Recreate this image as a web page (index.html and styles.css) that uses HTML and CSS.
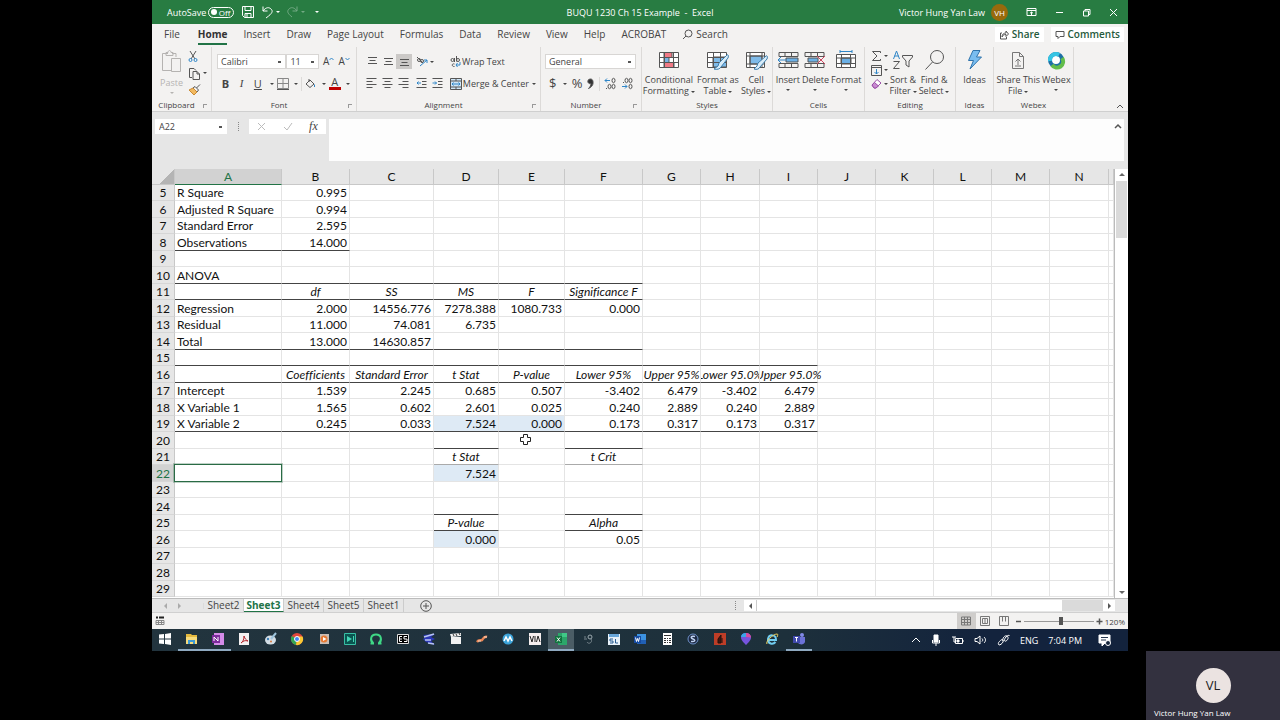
FILE: index.html
```html
<!DOCTYPE html>
<html lang="en">
<head>
    <meta charset="UTF-8">
    <meta name="viewport" content="width=device-width, initial-scale=1.0">
    <title>BUQU 1230 Ch 15 Example - Excel</title>
    <link rel="stylesheet" href="styles.css">
</head>
<body>
    <main class="desktop">
        <header class="title-bar">
            <div class="quick-access">
                <label class="autosave">AutoSave
                    <span class="switch"><input type="checkbox"><span>Off</span></span>
                </label>
                <button class="save" aria-label="Save"><svg width="14" height="14" viewBox="0 0 14 14"><path d="M1.5 1.5h11v11h-9l-2-2zM4 1.5v4h6v-4M4 12.5v-4h6v4M6 9v3"/></svg></button>
                <button aria-label="Undo"><svg width="13" height="14" viewBox="0 0 13 14"><path d="M2 1.500v4.500h4.500M2 6c3-4 6-4 8-2s2 4-5 9"/></svg><i class="caret"></i></button>
                <button class="faded" aria-label="Redo"><svg width="13" height="14" viewBox="0 0 13 14"><path d="M11 1.500v4.500H6.500M11 6C8 2 5 2 3 4s-2 4 3 8"/></svg><i class="caret"></i></button>
                <button class="customize" aria-label="Customize Quick Access Toolbar"><i class="caret"></i></button>
            </div>
            <h1>BUQU 1230 Ch 15 Example&nbsp; -&nbsp; Excel</h1>
            <div class="window-controls">
                <span>Victor Hung Yan Law</span>
                <span class="avatar">VH</span>
                <button aria-label="Ribbon Display Options"><svg width="11" height="10" viewBox="0 0 11 10"><path d="M1 1.500h9v7H1zM1 3.500h9M5.500 8V5M4 6.200 5.500 5 7 6.200"/></svg></button>
                <button aria-label="Minimize"><svg width="9" height="9" viewBox="0 0 9 9"><path d="M1 4.500h7"/></svg></button>
                <button aria-label="Restore"><svg width="9" height="9" viewBox="0 0 9 9"><path d="M1.500 3h5v5h-5zM3 3V1.500h5v5H6.500"/></svg></button>
                <button aria-label="Close"><svg width="9" height="9" viewBox="0 0 9 9"><path d="m1 1 7 7M8 1 1 8"/></svg></button>
            </div>
        </header>

        <nav class="tabs">
            <a class="file" href="#">File</a>
            <a class="current" href="#">Home</a>
            <a href="#">Insert</a>
            <a href="#">Draw</a>
            <a href="#">Page Layout</a>
            <a href="#">Formulas</a>
            <a href="#">Data</a>
            <a href="#">Review</a>
            <a href="#">View</a>
            <a href="#">Help</a>
            <a href="#">ACROBAT</a>
            <a class="search" href="#"><svg width="11" height="11" viewBox="0 0 11 11"><circle cx="6.500" cy="4.500" r="3.500"/><path d="M4 7 1 10"/></svg>Search</a>
            <button class="share"><svg width="10" height="10" viewBox="0 0 10 10"><path d="M3 3H1.500v6h6V7M3 7c0-3 2-4 4-4V1l2.500 3L7 6.500v-2C5 4.500 4 5 3 7z"/></svg>Share</button>
            <button class="comments"><svg width="10" height="10" viewBox="0 0 10 10"><path d="M1 1.500h8v5H5l-2 2v-2H1z"/></svg>Comments</button>
        </nav>

        <section class="ribbon">
            <div class="group clipboard">
                <div class="group-body">
                    <button class="big paste" disabled>
                        <svg width="22" height="23" viewBox="0 0 22 23"><path d="M7 3.500H1.500v17H10M15 7V3.500h-4M5 5.500v-3h2C7 1 8 .5 8.500.5S10 1 10 2.500h2v3zM10.500 8.500h9v13h-9z"/></svg>
                        <span>Paste</span><i class="caret"></i>
                    </button>
                    <div class="small-column">
                        <button aria-label="Cut"><svg width="10" height="13" viewBox="0 0 10 13"><path d="m2 1 5 8M8 1 3 9"/><g class="blue"><circle cx="2.500" cy="10" r="1.500"/><circle cx="7.500" cy="10" r="1.500"/></g></svg></button>
                        <button aria-label="Copy"><svg width="13" height="13" viewBox="0 0 13 13"><path d="M4 10.500H1.500v-9H6l2 2M5 4.500h4l2.500 2.500v5.500H5zM9 4.500V7h2.500"/></svg><i class="caret"></i></button>
                        <button aria-label="Format Painter"><svg width="13" height="13" viewBox="0 0 13 13"><path d="M1 7 5 5l4 4-3 3z" fill="#f2b95f" stroke="#c98a35"/><path d="m5 5 2-1.500 3.500 3.500L9 9M8.500 5 12 1.500" /></svg></button>
                    </div>
                </div>
                <div class="group-name with-launcher">Clipboard</div><i class="launcher"></i>
            </div>

            <div class="group font">
                <div class="group-body rows">
                    <div class="row">
                        <select class="font-name" aria-label="Font"><option>Calibri</option></select><select class="font-size" aria-label="Font size"><option>11</option></select>
                        <button class="grow" aria-label="Increase font size">A<svg width="5" height="12" viewBox="0 0 5 12"><path class="blue" d="M.5 4 2.500 2l2 2"/></svg></button>
                        <button class="grow" aria-label="Decrease font size">A<svg width="5" height="12" viewBox="0 0 5 12"><path class="blue" d="m.5 2 2 2 2-2"/></svg></button>
                    </div>
                    <div class="row spread">
                        <button class="letter"><b>B</b></button>
                        <button class="letter italic">I</button>
                        <button class="letter underline">U</button><i class="caret"></i>
                        <button aria-label="Borders"><svg width="12" height="12" viewBox="0 0 12 12"><path d="M.5.5h11v10H.5zM6 .5v10M.5 5.500h11" stroke="#888"/><path d="M0 11.500h12"/></svg></button><i class="caret"></i>
                        <i class="bar"></i>
                        <button aria-label="Fill color"><svg width="11" height="11" viewBox="0 0 11 11"><path d="m1 6 4-4 4 4-4 3.500zM4 1v3"/><path class="blue" d="M9.500 6.500v2.500"/></svg></button><i class="caret"></i>
                        <button class="font-color">A</button><i class="caret"></i>
                    </div>
                </div>
                <div class="group-name with-launcher">Font</div><i class="launcher"></i>
            </div>

            <div class="group alignment">
                <div class="group-body rows">
                    <div class="row">
                        <button aria-label="Top align"><svg width="11" height="9" viewBox="0 0 11 9"><path d="M1 .5h9M2.500 3.500h6M1 6.500h9"/></svg></button>
                        <button aria-label="Middle align"><svg width="11" height="9" viewBox="0 0 11 9"><path d="M1 1.500h9M2.500 4.500h6M1 7.500h9"/></svg></button>
                        <button class="pressed" aria-label="Bottom align"><svg width="11" height="9" viewBox="0 0 11 9"><path d="M1 2.500h9M2.500 5.500h6M1 8.500h9"/></svg></button>
                        <button class="wide" aria-label="Orientation"><svg width="12" height="11" viewBox="0 0 12 11"><circle cx="3" cy="4" r="1.500"/><circle cx="6" cy="5" r="1.500"/><path d="m1 1 6 6"/><path class="blue" d="m4 10 7-6M8 4h3v3"/></svg><i class="caret"></i></button>
                        <button class="text-button"><svg width="11" height="12" viewBox="0 0 11 12"><circle cx="2.500" cy="4" r="1.500"/><path d="M4.500 2v4M6.500 0v5.500M4.500 8c-3-1-3 3 0 2.500"/><circle cx="8" cy="4" r="1.500"/><path class="blue" d="M10 6v3H6M7.500 7 6 9l1.500 2"/></svg>Wrap Text</button>
                    </div>
                    <div class="row">
                        <button aria-label="Align left"><svg width="11" height="11" viewBox="0 0 11 11"><path d="M.5.5h10M.5 3.500h6M.5 6.500h10M.5 9.500h6"/></svg></button>
                        <button aria-label="Center"><svg width="11" height="11" viewBox="0 0 11 11"><path d="M.5.5h10M2.500 3.500h6M.5 6.500h10M2.500 9.500h6"/></svg></button>
                        <button aria-label="Align right"><svg width="11" height="11" viewBox="0 0 11 11"><path d="M.5.5h10M4.500 3.500h6M.5 6.500h10M4.500 9.500h6"/></svg></button>
                        <button class="indent" aria-label="Decrease indent"><svg width="11" height="11" viewBox="0 0 11 11"><path d="M.5.5h10M6 3.500h4.500M6 6.500h4.500M.5 9.500h10"/><path class="blue" d="M5 5H1M2.500 3.500 1 5l1.500 1.500"/></svg></button>
                        <button aria-label="Increase indent"><svg width="11" height="11" viewBox="0 0 11 11"><path d="M.5.5h10M6 3.500h4.500M6 6.500h4.500M.5 9.500h10"/><path class="blue" d="M.5 5h4M3 3.500 4.500 5 3 6.500"/></svg></button>
                        <button class="text-button"><svg width="12" height="12" viewBox="0 0 12 12"><path d="M.5.5h11v11H.5z" fill="#cfe6f7"/><path d="M.5 3h11M.5 9h11M6 .5V3M6 9v2.500"/><path class="blue" d="M2 6h8M3.500 4.500 2 6l1.500 1.500M8.500 4.500 10 6 8.500 7.500"/></svg>Merge &amp; Center<i class="caret"></i></button>
                    </div>
                </div>
                <div class="group-name with-launcher">Alignment</div><i class="launcher"></i>
            </div>

            <div class="group number">
                <div class="group-body rows">
                    <div class="row"><select class="format" aria-label="Number format"><option>General</option></select></div>
                    <div class="row spread">
                        <button class="symbol">$</button><i class="caret"></i>
                        <button class="symbol">%</button>
                        <button aria-label="Comma style"><svg width="7" height="12" viewBox="0 0 7 12"><path d="M3.500 1C1 1 .5 3 1 4.300S3 6 4 5.500C4 7.500 3 9 1.500 10.500 5 9 6.500 6.500 6 3.500 5.700 1.700 4.700 1 3.500 1z" fill="#333"/></svg></button>
                        <i class="bar"></i>
                        <button aria-label="Increase decimal"><svg width="12" height="13" viewBox="0 0 12 13"><path class="blue" d="M6 3.500H1M3 1.500l-2 2 2 2"/><ellipse cx="9.500" cy="3.500" rx="1.500" ry="2.200"/><ellipse cx="5.500" cy="9.500" rx="1.500" ry="2.200"/><ellipse cx="9.500" cy="9.500" rx="1.500" ry="2.200"/><path d="M2 11.500h1"/></svg></button>
                        <button aria-label="Decrease decimal"><svg width="12" height="13" viewBox="0 0 12 13"><path class="blue" d="M1 9.500h5M4 7.500l2 2-2 2"/><ellipse cx="5.500" cy="3.500" rx="1.500" ry="2.200"/><ellipse cx="9.500" cy="3.500" rx="1.500" ry="2.200"/><ellipse cx="9.500" cy="9.500" rx="1.500" ry="2.200"/><path d="M2 5.500h1"/></svg></button>
                    </div>
                </div>
                <div class="group-name with-launcher">Number</div><i class="launcher"></i>
            </div>

            <div class="group styles">
                <div class="group-body">
                    <button class="big"><svg width="22" height="20" viewBox="0 0 22 20"><path d="M1.500 2.500h19v15h-19z" fill="#fff"/><path d="M6 2.500h8v5H6zM6 12.500h10v5H6z" fill="#f17a86"/><path d="M6 7.500h5v5H6z" fill="#79b4e6"/><path d="M1.500 7.500h19M1.500 12.500h19M6.500 2.500v15M15.500 2.500v15"/></svg><span>Conditional</span><span>Formatting<i class="caret"></i></span></button>
                    <button class="big"><svg width="23" height="20" viewBox="0 0 23 20"><path d="M1.500 2.500h19v15h-19z" fill="#fff"/><path d="M7 7h13.500v10H7z" fill="#7fbbe9"/><path d="M1.500 7.500h19M1.500 12.500h19M7.500 2.500v15M14.500 2.500v15"/><path d="m21 5-8 8-1 3-4 3c3 1 6 0 7-2l7-9c1-2 0-4-1-3z" fill="#d8ecf9" stroke="#3d7fae"/></svg><span>Format as</span><span>Table<i class="caret"></i></span></button>
                    <button class="big"><svg width="23" height="20" viewBox="0 0 23 20"><path d="M1.500 2.500h18v15h-18z" fill="#fff"/><path d="M5 6h12v8H5z" fill="#7fbbe9"/><path d="M1.500 6h18M1.500 14h18M5 2.500v15M17 2.500v15"/><path d="m21 6-8 7-1 3-3 3c3 1 5 0 6-2l7-8c1-2 0-4-1-3z" fill="#d8ecf9" stroke="#3d7fae"/></svg><span>Cell</span><span>Styles<i class="caret"></i></span></button>
                </div>
                <div class="group-name">Styles</div>
            </div>

            <div class="group cells">
                <div class="group-body">
                    <button class="big"><svg width="22" height="20" viewBox="0 0 22 20"><path d="M2 2.500h19v4H2zM2 13.500h19v4H2zM8 2.500v4M14.500 2.500v4M8 13.500v4M14.500 13.500v4"/><path d="M9 8h12v4H9z" fill="#6bb0e6"/><path class="blue" d="M9 10H1M4 7l-3 3 3 3"/></svg><span>Insert</span><i class="caret"></i></button>
                    <button class="big"><svg width="22" height="20" viewBox="0 0 22 20"><path d="M1 2.500h19v4H1zM1 13.500h19v4H1zM7 2.500v4M13.500 2.500v4M7 13.500v4M13.500 13.500v4"/><path d="M4 8h10v4H4z" fill="#6bb0e6"/><path d="m13 6 8 8M21 6l-8 8" stroke="#cf4660"/></svg><span>Delete</span><i class="caret"></i></button>
                    <button class="big"><svg width="22" height="20" viewBox="0 0 22 20"><path d="M1.500 4.500h19v13h-19z" fill="#fff"/><path d="M6 8h10v6H6z" fill="#6bb0e6"/><path d="M1.500 8h19M1.500 13.500h19M6.500 4.500v13M15.500 4.500v13"/><path class="blue" d="M5 1.500h12M5 0v3M17 0v3"/></svg><span>Format</span><i class="caret"></i></button>
                </div>
                <div class="group-name">Cells</div>
            </div>

            <div class="group editing">
                <div class="group-body">
                    <div class="small-column">
                        <button aria-label="AutoSum"><svg width="11" height="12" viewBox="0 0 11 12"><path d="M9.500 3V1.500h-8L6 6l-4.500 4.500h8V9"/></svg><i class="caret"></i></button>
                        <button aria-label="Fill"><svg width="11" height="11" viewBox="0 0 11 11"><path d="M.5.5h10v10H.5zM.5 2.500h10"/><path class="blue" d="M5.500 4v5M3.500 7l2 2 2-2"/></svg><i class="caret"></i></button>
                        <button aria-label="Clear"><svg width="11" height="11" viewBox="0 0 11 11"><path d="m1 7 5-5.500L10 5l-5 5H3z" fill="#fff" stroke="#9a4fa8"/><path d="m1 7 2.500-2.500L7.500 8 5 10H3z" fill="#c88ad0" stroke="#9a4fa8"/></svg><i class="caret"></i></button>
                    </div>
                    <button class="big"><svg width="22" height="20" viewBox="0 0 22 20"><path class="blue" d="m1.500 9 3-8 3 8M2.500 6h4"/><path d="M1.500 11.500h6l-6 7h6M10.500 5.500h10v1.500l-3.500 4v6l-3-2v-4l-3.500-4z"/></svg><span>Sort &amp;</span><span>Filter<i class="caret"></i></span></button>
                    <button class="big"><svg width="22" height="20" viewBox="0 0 22 20"><circle cx="14" cy="7" r="6.500"/><path d="m9.500 12-7 7.500"/></svg><span>Find &amp;</span><span>Select<i class="caret"></i></span></button>
                </div>
                <div class="group-name">Editing</div>
            </div>

            <div class="group ideas">
                <div class="group-body">
                    <button class="big"><svg width="18" height="20" viewBox="0 0 18 20"><path d="M7 .5h7L10.500 7h5L4 19l3.500-8.500h-5z" fill="#79bdf0" stroke="#2f73ab"/></svg><span>Ideas</span></button>
                </div>
                <div class="group-name">Ideas</div>
            </div>

            <div class="group webex">
                <div class="group-body">
                    <button class="big"><svg width="16" height="20" viewBox="0 0 16 20"><path d="M2.500 2.500h7l4 4v12h-11zM9.500 2.500v4h4M8 15V9M5.500 11.500 8 9l2.500 2.500M5 16h6" stroke="#777"/></svg><span>Share This</span><span>File<i class="caret"></i></span></button>
                    <button class="big"><svg width="20" height="20" viewBox="0 0 20 20"><circle cx="10" cy="10" r="6" stroke="#1d70a5" stroke-width="4" fill="#fff"/><path d="M4 11a6 6 0 0 1 9-6" stroke="#35c4e3" stroke-width="4"/><path d="M16 8a6 6 0 0 1-10 7" stroke="#62bd4b" stroke-width="4"/></svg><span>Webex</span><i class="caret"></i></button>
                </div>
                <div class="group-name">Webex</div>
            </div>
            <button class="collapse" aria-label="Collapse the Ribbon"><svg width="8" height="6" viewBox="0 0 8 6"><path d="m1 5 3-3 3 3"/></svg></button>
        </section>

        <section class="formula-bar">
            <select class="name-box" aria-label="Name Box"><option>A22</option></select>
            <i class="dots"></i>
            <div class="formula-buttons">
                <button aria-label="Cancel"><svg width="9" height="9" viewBox="0 0 9 9"><path d="m1 1 7 7M8 1 1 8" stroke="#bbb"/></svg></button>
                <button aria-label="Enter"><svg width="10" height="9" viewBox="0 0 10 9"><path d="m1 5 3 3 5-7" stroke="#bbb"/></svg></button>
                <button class="fx">fx</button>
            </div>
            <textarea class="formula" aria-label="Formula"></textarea>
            <svg class="expand" width="8" height="6" viewBox="0 0 8 6"><path d="m1 5 3-3 3 3" stroke-width="1.500"/></svg>
        </section>

        <section class="sheet">
            <div class="grid">
                <table>
                    <colgroup>
                        <col class="c-row"><col class="c-a"><col class="c-b"><col class="c-c"><col class="c-d"><col class="c-e"><col class="c-f">
                        <col class="c-std"><col class="c-g"><col class="c-std"><col class="c-std"><col class="c-std"><col class="c-std"><col class="c-std"><col class="c-g"><col>
                    </colgroup>
                    <thead><tr id="columns"></tr></thead>
                    <tbody id="cells"></tbody>
                </table>
                <svg class="pointer" width="13" height="13" viewBox="0 0 13 13"><path d="M4.500 1.500h4v3h3v4h-3v3h-4v-3h-3v-4h3z" fill="#fff" stroke="#222"/></svg>
            </div>
            <div class="v-scroll">
                <button class="up" aria-label="Scroll up"></button>
                <span class="thumb"></span>
                <button class="down" aria-label="Scroll down"></button>
            </div>
        </section>

        <section class="sheet-tabs">
            <div class="sheet-nav"><i class="left"></i><i class="right"></i></div>
            <button>Sheet2</button>
            <button class="active">Sheet3</button>
            <button>Sheet4</button>
            <button>Sheet5</button>
            <button>Sheet1</button>
            <button class="new-sheet" aria-label="New sheet"><svg width="12" height="12" viewBox="0 0 12 12"><circle cx="6" cy="6" r="5.300"/><path d="M6 3v6M3 6h6"/></svg></button>
            <i class="dots"></i>
            <div class="h-scroll">
                <button aria-label="Scroll left"><i class="left"></i></button>
                <span class="thumb"></span>
                <span class="track"></span>
                <button aria-label="Scroll right"><i class="right"></i></button>
            </div>
        </section>

        <footer class="status-bar">
            <svg width="10" height="10" viewBox="0 0 10 10"><path d="M1 1.500h2M4 1.500h5" stroke="#222" stroke-width="2"/><path d="M1 4.500h8v4H1zM1 6.500h8M3.500 4.500v4M6.500 4.500v4" stroke="#888"/></svg>
            <div class="views">
                <button class="on" aria-label="Normal"><svg width="10" height="10" viewBox="0 0 10 10"><path d="M.5 1h9v8h-9zM.5 3.500h9M.5 6.500h9M3.500 1v8M6.500 1v8"/></svg></button>
                <button aria-label="Page Layout"><svg width="10" height="10" viewBox="0 0 10 10"><path d="M.5.5h9v9h-9zM2.500 2.500h5v5h-5zM4 4h2M4 6h2"/></svg></button>
                <button aria-label="Page Break Preview"><svg width="10" height="10" viewBox="0 0 10 10"><path d="M.5.5h9v9h-9zM3.500.5v5M6.500.5v5"/></svg></button>
            </div>
            <button class="zoom-step" aria-label="Zoom out"><svg width="7" height="7" viewBox="0 0 7 7"><path d="M1 3.500h5" stroke-width="1.500"/></svg></button>
            <input class="zoom" type="range" min="10" max="215" value="120" aria-label="Zoom">
            <button class="zoom-step" aria-label="Zoom in"><svg width="7" height="7" viewBox="0 0 7 7"><path d="M.5 3.500h6M3.500.5v6" stroke-width="1.500"/></svg></button>
            <span class="zoom-value">120%</span>
        </footer>

        <nav class="taskbar">
            <div class="apps">
                <button aria-label="Start"><svg width="14" height="14" viewBox="0 0 14 14"><path d="M1 2.500 6 2v4.500H1zM7 2l6-1v5.500H7zM1 7.500h5V12l-5-.5zM7 7.500h6V13l-6-1z" fill="#fff"/></svg></button>
                <button class="open" aria-label="File Explorer"><svg width="14" height="14" viewBox="0 0 14 14"><path d="M1 2h5l1 1h5v9H1z" fill="#e5b93e"/><path d="M1 5h11v7H1z" fill="#f8dc7c"/><path d="M3 8h7v4H8v-2H5v2H3z" fill="#3e9ad4"/></svg></button>
                <button class="open" aria-label="OneNote"><svg width="14" height="14" viewBox="0 0 14 14"><path d="M3 1h10v12H3z" fill="#d48be8"/><path d="M1 3h8v8H1z" fill="#7d2b9c"/><path d="M3 9V5l4 4V5" stroke="#fff"/></svg></button>
                <button aria-label="Acrobat"><svg width="14" height="14" viewBox="0 0 14 14"><path d="M2 1h10v12H2z" fill="#f4f1f1"/><path d="M7 4c1 3 2 4 4 5-3-1-5 0-7 2 2-1 3-4 3-7z" stroke="#b3262c"/></svg></button>
                <button aria-label="Paint"><svg width="14" height="14" viewBox="0 0 14 14"><ellipse cx="6.500" cy="8" rx="5.500" ry="4.500" fill="#d4dde4"/><circle cx="4" cy="7" r="1.200" fill="#3e80b8"/><circle cx="7" cy="9.500" r="1" fill="#d5763b"/><path d="M7 7 12 1" stroke="#9fc5dd" stroke-width="2"/></svg></button>
                <button aria-label="Chrome"><svg width="14" height="14" viewBox="0 0 14 14"><circle cx="7" cy="7" r="6" fill="#e2483d"/><path d="M7 7 1.800 4A6 6 0 0 0 6 13z" fill="#34a853"/><path d="m7 7-1 6a6 6 0 0 0 6.500-8.500H7z" fill="#fbc934"/><circle cx="7" cy="7" r="2.500" fill="#4285f4" stroke="#fff"/></svg></button>
                <button aria-label="Media Player"><svg width="14" height="14" viewBox="0 0 14 14"><path d="M3 2h9v10H3z" fill="#c9bdb4"/><circle cx="7" cy="7" r="3.500" fill="#e77a32"/><path d="m6 5 3.500 2L6 9z" fill="#fff"/></svg></button>
                <button aria-label="Video Editor"><svg width="14" height="14" viewBox="0 0 14 14"><path d="M1.500 1.500h11v11h-11z" fill="#0a5550" stroke="#39bfa5"/><path d="m4 4 5 3-5 3z" fill="#43d6b5"/><path d="M10.500 4v6" stroke="#43d6b5"/></svg></button>
                <button aria-label="Audio"><svg width="14" height="14" viewBox="0 0 14 14"><path d="M4.500 11.500c-4-3-3-9 2.500-9s6.500 6 2.500 9M1.500 11.500h3.500M12.500 11.500H9" stroke="#3fd886" stroke-width="2"/></svg></button>
                <button aria-label="ES"><svg width="14" height="14" viewBox="0 0 14 14"><path d="M1.500 2.500h11v9h-11z" fill="#000" stroke="#ddd"/><path d="M6 4.500H3.500v5H6M3.500 7H6M11 4.500H8V7h3v2.500H8" stroke="#fff"/></svg></button>
                <button aria-label="Encoder"><svg width="14" height="14" viewBox="0 0 14 14"><path d="M1 3 13 2 9 5l4 2-4 2 4 4-9-3-3-3 3-2z" fill="#2b37b5"/><path d="m2 5 10-3M3 8h6M6 11l6 1" stroke="#b9c5f3" stroke-width="1.500"/></svg></button>
                <button aria-label="Movie Maker"><svg width="14" height="14" viewBox="0 0 14 14"><path d="M2 5h10v7H2zM1 2l11-1v3L2 5z" fill="#f1f1f1"/><path d="m4 2 1 2M7 2l1 2M10 1l1 2" stroke="#333"/></svg></button>
                <button aria-label="Converter"><svg width="14" height="14" viewBox="0 0 14 14"><path d="M2 10c2-3 4-1 5-2s2-4 5-3" stroke="#e98555" stroke-width="2.500"/><path d="M3 9h3M9 5h3" stroke="#f6dac4"/></svg></button>
                <button aria-label="Mail"><svg width="14" height="14" viewBox="0 0 14 14"><circle cx="7" cy="7" r="5.500" fill="#3aa2d8"/><path d="m3 9 2-4 2 4 2-4 2 4" stroke="#fff" stroke-width="1.500"/></svg></button>
                <button aria-label="VIA"><svg width="14" height="14" viewBox="0 0 14 14"><path d="M1 1h12v12H1z" fill="#f5eeee"/><path d="m2 4 2 6 1.500-6M7 4v6M8.500 10l1.500-6 2 6" stroke="#222"/></svg></button>
                <button class="open focused" aria-label="Excel"><svg width="14" height="14" viewBox="0 0 14 14"><path d="M4 1h9v12H4z" fill="#2ca66a"/><path d="M8 1h5v4H8z" fill="#40c987"/><path d="M1 4h7v7H1z" fill="#12743f"/><path d="m3 5.500 3 4M6 5.500l-3 4" stroke="#fff"/></svg></button>
                <button aria-label="Steam"><svg width="14" height="14" viewBox="0 0 14 14"><circle cx="9" cy="5" r="2" stroke="#9daab0"/><path d="M10 7c2 3-2 6-4 3M3 5h2M3 7h3" stroke="#78868d"/></svg></button>
                <button aria-label="SL"><svg width="14" height="14" viewBox="0 0 14 14"><path d="M1 2h12v11H1z" fill="#e9f2fa"/><path d="M2 2h10v3H2z" fill="#69a7da"/><path d="M6 7H3v2h3v2H3M8.500 7v4H11" stroke="#295c91"/></svg></button>
                <button aria-label="Word"><svg width="14" height="14" viewBox="0 0 14 14"><path d="M4 2h9v10H4z" fill="#3c92e0"/><path d="M4 8h9v4H4z" fill="#2160b5"/><path d="M1 4h7v7H1z" fill="#174ba0"/><path d="m2.500 5.500 1 4 1-3 1 3 1-4" stroke="#fff"/></svg></button>
                <button aria-label="Calculator"><svg width="14" height="14" viewBox="0 0 14 14"><path d="M3 1h9v12H3z" fill="#fff"/><path d="M4 3.500h7M4 6.500h2M7 6.500h1M9 6.500h2M4 8.500h2M7 8.500h1M9 8.500h2M4 10.500h2M7 10.500h1M9 10.500h2" stroke="#333"/></svg></button>
                <button aria-label="Skype"><svg width="14" height="14" viewBox="0 0 14 14"><circle cx="7" cy="7" r="5" fill="#1c2942" stroke="#6f91c9"/><path d="M9 4.500C5 3.500 4 6 7 7s2 3-2 2.500" stroke="#c2d3f2" stroke-width="1.500"/></svg></button>
                <button aria-label="Reader"><svg width="14" height="14" viewBox="0 0 14 14"><path d="M1 1h12v12H1z" fill="#bd3d27"/><path d="M5 11V7l3-4v8zM9 11V6" stroke="#20120e" fill="#431510"/></svg></button>
                <button aria-label="Maps"><svg width="14" height="14" viewBox="0 0 14 14"><path d="M7 1c3 0 5 2 5 4.500S9 11 7 13C5 11 2 8 2 5.500S4 1 7 1z" fill="#7654dd"/><path d="M7 1c3 0 5 2 5 4.500L7 5z" fill="#d64c9f"/><path d="M2 5c0-2.500 2-4 5-4v4z" fill="#39a6e8"/></svg></button>
                <button aria-label="Internet Explorer"><svg width="14" height="14" viewBox="0 0 14 14"><path d="M3 8h8c0-6-7-6-8-1-.5 5 5 6 7.500 3" stroke="#72cdf1" stroke-width="2"/><path d="M2 12c-2-2 6-10 10-10 1 0 1 1 0 3" stroke="#f2d35b"/></svg></button>
                <button class="open" aria-label="Teams"><svg width="14" height="14" viewBox="0 0 14 14"><circle cx="10" cy="3" r="2" fill="#8289e8"/><path d="M6 5h7v5c-1 3-5 3-7 1z" fill="#6c72d8"/><path d="M1 4h7v7H1z" fill="#4049ac"/><path d="M3 5.500h3M4.500 5.500v4" stroke="#fff"/></svg></button>
            </div>
            <div class="tray">
                <svg width="10" height="8" viewBox="0 0 10 8"><path d="m1 6 4-4 4 4"/></svg>
                <svg width="10" height="12" viewBox="0 0 10 12"><path d="M3 1h4v7H3z" fill="#fff"/><path d="M1.500 6v3h7V6M5 9v3"/></svg>
                <svg width="13" height="10" viewBox="0 0 13 10"><path d="M4.500 3.500h7v5h-7zM12 5v2M1 2h4M3 2v5h2"/><path d="M6 5h2v2H6z" fill="#fff"/></svg>
                <svg width="13" height="10" viewBox="0 0 13 10"><path d="M1 3.500h2L6 1v8L3 6.500H1zM8 3.500c1 1 1 2 0 3M10 2c2 2 2 4 0 6"/></svg>
                <svg width="13" height="12" viewBox="0 0 13 12"><path d="M2 11c-2-2 1-4 2-5s3 0 2 2-3 3-4 3zM6 7c-1-3 2-6 4-5s1 4-1 5-2-2 0-4 4-2 3-1"/></svg>
                <span>ENG</span>
                <time>7:04 PM</time>
                <svg class="notice" width="13" height="13" viewBox="0 0 13 13"><path d="M1 1h11v8H7l-3 3V9H1z" fill="#fff"/><path d="M3 3.500h7M3 6h5" stroke="#26364e"/><circle cx="10" cy="9" r="2.500" fill="#14243c"/></svg>
            </div>
        </nav>
    </main>

    <aside class="participant">
        <span class="initials">VL</span>
        <span class="name">Victor Hung Yan Law</span>
    </aside>

    <script>
        const letters = "ABCDEFGHIJKLMN".split("");
        const firstRow = 5;
        const lastRow = 29;

        // Cell values by row, starting from column A
        const values = {
            5: ["R Square", "0.995"],
            6: ["Adjusted R Square", "0.994"],
            7: ["Standard Error", "2.595"],
            8: ["Observations", "14.000"],
            10: ["ANOVA"],
            11: ["", "df", "SS", "MS", "F", "Significance F"],
            12: ["Regression", "2.000", "14556.776", "7278.388", "1080.733", "0.000"],
            13: ["Residual", "11.000", "74.081", "6.735"],
            14: ["Total", "13.000", "14630.857"],
            16: ["", "Coefficients", "Standard Error", "t Stat", "P-value", "Lower 95%", "Upper 95%", "Lower 95.0%", "Upper 95.0%"],
            17: ["Intercept", "1.539", "2.245", "0.685", "0.507", "-3.402", "6.479", "-3.402", "6.479"],
            18: ["X Variable 1", "1.565", "0.602", "2.601", "0.025", "0.240", "2.889", "0.240", "2.889"],
            19: ["X Variable 2", "0.245", "0.033", "7.524", "0.000", "0.173", "0.317", "0.173", "0.317"],
            21: ["", "", "", "t Stat", "", "t Crit"],
            22: ["", "", "", "7.524"],
            25: ["", "", "", "P-value", "", "Alpha"],
            26: ["", "", "", "0.000", "", "0.05"]
        };

        const headingRows = [11, 16, 21, 25];
        const shaded = ["D19", "E19", "D22", "D26"];

        // Columns that have a dark or a thin rule under them, by row
        const rules = { 8: "AB", 10: "ABCDEF", 11: "ABCDEF", 14: "ABCDEF", 15: "ABCDEFGHI", 16: "ABCDEFGHI", 19: "ABCDEFGHI", 20: "DF", 24: "DF", 25: "DF" };
        const thinRules = { 21: "DF" };

        function cellClass(row, letter, index) {
            const names = [];
            if (headingRows.includes(row)) names.push("heading");
            else if (index > 0) names.push("num");
            if (shaded.includes(letter + row)) names.push("shaded");
            if ((rules[row] || "").includes(letter)) names.push("rule");
            if ((thinRules[row] || "").includes(letter)) names.push("thin-rule");
            if (letter + row === "A22") names.push("selected");
            if (letter + row === "H16") names.push("clip");
            if (letter + row === "I16") names.push("clip-left");
            return names.join(" ");
        }

        let head = '<th class="corner"></th>';
        letters.forEach(letter => {
            head += `<th scope="col" class="${letter === "A" ? "picked" : ""}">${letter}</th>`;
        });
        document.getElementById("columns").innerHTML = head + "<th></th>";

        let body = "";
        for (let row = firstRow; row <= lastRow; row++) {
            body += `<tr><th scope="row" class="${row === 22 ? "picked" : ""}">${row}</th>`;
            letters.forEach((letter, index) => {
                const value = (values[row] || [])[index] || "";
                body += `<td class="${cellClass(row, letter, index)}"><div>${value}</div></td>`;
            });
            body += "<td></td></tr>";
        }
        document.getElementById("cells").innerHTML = body;
    </script>
</body>
</html>
```
FILE: styles.css
```css
* {
    box-sizing: border-box;
}
body {
    margin: 0;
    background: #000;
    color: #444;
    font-family: "Open Sans", "Noto Sans", sans-serif;
    font-size: 9px;
    line-height: 11px;
}
button, select, input, textarea {
    font: inherit;
    color: inherit;
    margin: 0;
    padding: 0;
    border: none;
    background: none;
}
button {
    display: flex;
    align-items: center;
    justify-content: center;
    white-space: nowrap;
}
a {
    color: inherit;
    text-decoration: none;
}
svg {
    fill: none;
    stroke: #555;
    flex: none;
    display: block;
}
.blue {
    stroke: #2f86c8;
}
.desktop {
    margin: 0 152px;
    background: #e6e6e6;
}
.caret {
    border: 2px solid transparent;
    border-top-color: currentColor;
    border-bottom: none;
    flex: none;
    display: inline-block;
    vertical-align: middle;
    margin-left: 2px;
}

/* Title bar */
.title-bar {
    display: grid;
    grid-template-columns: 1fr auto 1fr;
    align-items: center;
    height: 24px;
    background: #287c42;
    color: #fff;
}
.title-bar h1 {
    margin: 0;
    font-size: 9px;
    font-weight: normal;
}
.title-bar svg {
    stroke: #fff;
}
.quick-access {
    display: flex;
    align-items: center;
    padding-left: 15px;
    gap: 6px;
}
.autosave {
    display: flex;
    align-items: center;
    gap: 2px;
}
.switch {
    display: flex;
    align-items: center;
    justify-content: space-between;
    width: 26px;
    height: 11px;
    border: 1px solid #fff;
    border-radius: 6px;
    padding: 0 3px 0 2px;
    font-size: 8px;
}
.switch input {
    appearance: none;
    width: 6px;
    height: 6px;
    border-radius: 50%;
    background: #fff;
}
.save {
    margin-left: 1px;
}
.faded {
    opacity: 0.35;
}
.customize {
    margin-left: 2px;
}
.window-controls {
    display: flex;
    align-items: center;
    justify-content: flex-end;
    gap: 18px;
    padding-right: 10px;
}
.avatar {
    width: 17px;
    height: 17px;
    margin-left: -12px;
    border-radius: 50%;
    background: #986a0c;
    text-align: center;
    line-height: 17px;
    font-size: 8px;
}

/* Ribbon tabs */
.tabs {
    display: flex;
    align-items: flex-end;
    gap: 16px;
    height: 23px;
    padding: 0 4px 2px 12px;
    background: #f3f2f1;
    font-size: 10px;
}
.tabs a {
    line-height: 18px;
    border-bottom: 2px solid transparent;
    white-space: nowrap;
}
.tabs .file {
    margin-right: 2px;
}
.tabs .current {
    color: #333;
    font-weight: bold;
    border-bottom-color: #217346;
}
.tabs .search {
    display: flex;
    align-items: center;
    gap: 3px;
}
.tabs button {
    height: 15px;
    margin-bottom: 3px;
    padding: 0 4px;
    gap: 3px;
    background: #fff;
    color: #265a3c;
    font-weight: 600;
}
.tabs .share {
    margin-left: auto;
}
.tabs .comments {
    margin-left: -9px;
}

/* Ribbon */
.ribbon {
    display: flex;
    height: 65px;
    background: #f3f2f1;
    border-bottom: 1px solid #cfcfcf;
}
.group {
    position: relative;
    display: flex;
    flex-direction: column;
    flex: none;
    border-right: 1px solid #dcdad8;
}
.group-body {
    flex: 1;
    display: flex;
    justify-content: center;
    padding-top: 3px;
}
.group-name {
    height: 12px;
    font-size: 8px;
    line-height: 11px;
    text-align: center;
}
.with-launcher {
    padding-right: 10px;
}
.launcher {
    position: absolute;
    right: 4px;
    bottom: 3px;
    width: 4px;
    height: 4px;
    border-left: 1px solid #999;
    border-top: 1px solid #999;
}
.clipboard { width: 60px; }
.font { width: 145px; }
.alignment { width: 184px; }
.number { width: 101px; }
.styles { width: 131px; }
.cells { width: 92px; }
.editing { width: 91px; }
.ideas { width: 38px; }
.webex { width: 80px; }
.big {
    flex-direction: column;
    justify-content: flex-start;
}
.big svg {
    margin-bottom: 4px;
}
.big > .caret {
    margin: 4px 0 0;
}
.paste {
    color: #b5b3b1;
}
.paste svg {
    stroke: #b5b3b1;
}
.clipboard .group-body {
    gap: 5px;
    padding-left: 4px;
}
.small-column {
    display: flex;
    flex-direction: column;
    justify-content: space-between;
    padding-bottom: 3px;
}
.small-column button {
    justify-content: flex-start;
}
.rows {
    flex-direction: column;
    justify-content: flex-start;
    gap: 7px;
    padding: 7px 4px 0 5px;
}
.row {
    display: flex;
    align-items: center;
    height: 15px;
}
.spread {
    justify-content: space-between;
    padding: 0 4px;
}
.bar {
    width: 1px;
    height: 14px;
    background: #dcdad8;
}
.ribbon select, .name-box {
    appearance: none;
    height: 15px;
    padding: 0 3px;
    border: 1px solid #d8d6d4;
    background: #fff linear-gradient(#555, #555) no-repeat right 4px center / 3px 2px;
}
.font-name { width: 71px; }
.font-size { width: 33px; }
.format { width: 91px; }
.grow {
    width: 16px;
    font-size: 10px;
}
.font-size {
    margin-right: 2px;
}
.font .spread {
    font-size: 11px;
    padding: 0 2px;
}
.letter {
    width: 13px;
}
.italic {
    font-family: "Liberation Serif", serif;
    font-style: italic;
}
.underline {
    text-decoration: underline;
}
.font-color {
    width: 12px;
    line-height: 10px;
    border-bottom: 3px solid #c00000;
}
.alignment .rows {
    padding-left: 7px;
}
.alignment .row button {
    width: 16px;
    height: 15px;
}
.alignment .pressed {
    background: #cbc9c7;
}
.alignment .row .wide {
    width: 26px;
    margin-right: 8px;
}
.alignment .row .indent {
    margin-left: 2px;
}
.alignment .row .text-button {
    width: auto;
    gap: 1px;
    margin-left: 4px;
}
.number .rows {
    padding-left: 4px;
}
.symbol {
    font-size: 13px;
}
.styles .group-body {
    gap: 2px;
}
.cells .group-body {
    gap: 2px;
}
.editing .group-body {
    gap: 2px;
}
.editing .small-column {
    padding-bottom: 10px;
}
.webex .group-body {
    gap: 2px;
}
.collapse {
    margin: auto 4px 2px auto;
}

/* Formula bar */
.formula-bar {
    position: relative;
    display: flex;
    align-items: flex-start;
    height: 57px;
    padding: 7px 4px 8px 3px;
}
.name-box {
    width: 72px;
    border-color: #fff;
}
.dots {
    width: 1px;
    height: 9px;
    border-left: 1px dotted #888;
}
.formula-bar .dots {
    margin: 3px 10px 0 11px;
}
.formula-buttons {
    display: flex;
    justify-content: space-around;
    width: 77px;
    height: 15px;
    margin-right: 3px;
    background: #fff;
}
.fx {
    font: italic 12px "Liberation Serif", serif;
}
.formula {
    flex: 1;
    height: 42px;
    resize: none;
    background: #fdfdfd;
}
.expand {
    position: absolute;
    right: 6px;
    top: 11px;
}

/* Sheet */
.sheet {
    display: flex;
}
.grid {
    position: relative;
    flex: 1;
    min-width: 0;
    height: 429px;
    overflow: hidden;
    background: #fff;
}
table {
    width: 100%;
    table-layout: fixed;
    border-collapse: separate;
    border-spacing: 0;
    font-family: Lato, sans-serif;
    font-size: 12px;
    font-variant-ligatures: none;
    color: #111;
}
.c-row { width: 23px; }
.c-a { width: 107px; }
.c-b { width: 68px; }
.c-c { width: 84px; }
.c-d { width: 65px; }
.c-e { width: 66px; }
.c-f { width: 78px; }
.c-g { width: 59px; }
.c-std { width: 58px; }
th, td {
    height: 16px;
    padding: 0;
    line-height: 16px;
    border-right: 1px solid #e4e4e4;
    border-bottom: 1px solid #e4e4e4;
    white-space: nowrap;
}
th {
    line-height: 15px;
}
tbody tr:nth-child(even) > * {
    height: 17px;
}
th {
    background: #e6e6e6;
    font-weight: normal;
    border-color: #c8c8c8;
}
tbody th {
    border-bottom-color: #d6d6d6;
}
th.picked {
    background: #d2d2d2;
    color: #217346;
}
thead .picked {
    border-bottom-color: #217346;
}
.corner {
    background: linear-gradient(135deg, #e6e6e6 60%, #b4b4b4 60%);
}
td div {
    height: 15px;
    padding: 0 2px;
}
.num {
    text-align: right;
}
.heading div {
    display: flex;
    justify-content: center;
    padding: 0;
    font-style: italic;
}
.clip div {
    clip-path: inset(0);
}
.clip-left div {
    clip-path: inset(0 -10px 0 0);
}
.shaded {
    background: #deeaf5;
}
.rule {
    border-bottom-color: #444;
}
.thin-rule {
    border-bottom-color: #aaa;
}
.selected {
    position: relative;
}
.selected::after {
    content: "";
    position: absolute;
    inset: -1px;
    border: 1px solid #2a6b45;
    outline: 1px solid rgba(42, 107, 69, 0.3);
}
.pointer {
    position: absolute;
    left: 367px;
    top: 264px;
}
.v-scroll {
    display: flex;
    flex-direction: column;
    width: 14px;
    border-left: 1px solid #bbb;
    background: #fff;
}
.v-scroll button {
    height: 11px;
}
.up::after, .down::after {
    content: "";
    border: 3px solid transparent;
}
.up::after {
    border-bottom-color: #666;
    border-top: none;
}
.down::after {
    border-top-color: #666;
    border-bottom: none;
}
.v-scroll .thumb {
    height: 57px;
    margin: 1px 1px auto;
    background: #dadada;
}

/* Sheet tabs */
.sheet-tabs {
    display: flex;
    align-items: center;
    height: 15px;
    border-top: 1px solid #bbb;
    border-bottom: 1px solid #d0d0d0;
    font-size: 10px;
}
.sheet-nav {
    display: flex;
    justify-content: space-evenly;
    width: 52px;
    padding-right: 10px;
    border-right: 1px solid #ccc;
    opacity: 0.4;
}
.left, .right {
    border: 3px solid transparent;
}
.left {
    border-right-color: #555;
    border-left: none;
}
.right {
    border-left-color: #555;
    border-right: none;
}
.sheet-tabs > button {
    width: 40px;
    height: 13px;
    border-right: 1px solid #ccc;
}
.sheet-tabs .active {
    background: #fff;
    color: #217346;
    font-weight: bold;
    border-bottom: 1px solid #217346;
}
.sheet-tabs .new-sheet {
    width: 44px;
    border: none;
}
.sheet-tabs .dots {
    margin-left: auto;
}
.h-scroll {
    display: flex;
    width: 38%;
    height: 11px;
    margin: 0 13px 0 8px;
    background: #fff;
}
.h-scroll button {
    width: 12px;
}
.h-scroll .thumb {
    flex: 1;
    border-left: 1px solid #ccc;
}
.h-scroll .track {
    width: 41px;
    background: #dadada;
}

/* Status bar */
.status-bar {
    display: flex;
    align-items: center;
    height: 16px;
    padding: 0 3px;
    background: #f3f2f1;
}
.views {
    display: flex;
    margin-left: auto;
    margin-right: 1px;
}
.views button {
    width: 19px;
    height: 16px;
}
.views .on {
    background: #cfcdcb;
}
.views svg {
    stroke: #777;
}
.zoom {
    appearance: none;
    width: 70px;
    height: 1px;
    margin: 0 2px;
    background: #999;
}
.zoom::-webkit-slider-thumb {
    appearance: none;
    width: 4px;
    height: 8px;
    background: #555;
}
.zoom-value {
    margin-left: 2px;
    font-size: 8px;
}

/* Taskbar */
.taskbar {
    display: flex;
    justify-content: space-between;
    height: 22px;
    background: linear-gradient(90deg, #22343e, #1d303b 65%, #13233d 85%);
    color: #fff;
}
.apps {
    display: grid;
    grid-template-columns: repeat(25, 1fr);
    width: 660px;
}
.apps button {
    border-bottom: 2px solid transparent;
}
.apps svg {
    stroke: none;
}
.apps .open {
    border-bottom-color: #8fa9c0;
}
.apps .focused {
    background: #4b5d66;
}
.tray {
    display: flex;
    align-items: center;
    gap: 10px;
    padding-right: 17px;
}
.tray svg {
    stroke: #fff;
}
.notice {
    margin-left: 6px;
}

/* Meeting participant tile */
.participant {
    position: fixed;
    right: 0;
    bottom: 0;
    display: flex;
    flex-direction: column;
    align-items: center;
    gap: 4px;
    width: 134px;
    height: 69px;
    padding-top: 17px;
    background: #33313f;
    color: #fff;
    font-size: 8px;
}
.initials {
    width: 35px;
    height: 35px;
    border-radius: 50%;
    background: #ebe3e1;
    color: #222;
    font-size: 13px;
    line-height: 35px;
    text-align: center;
}
.name {
    align-self: flex-start;
    padding-left: 8px;
}
```
